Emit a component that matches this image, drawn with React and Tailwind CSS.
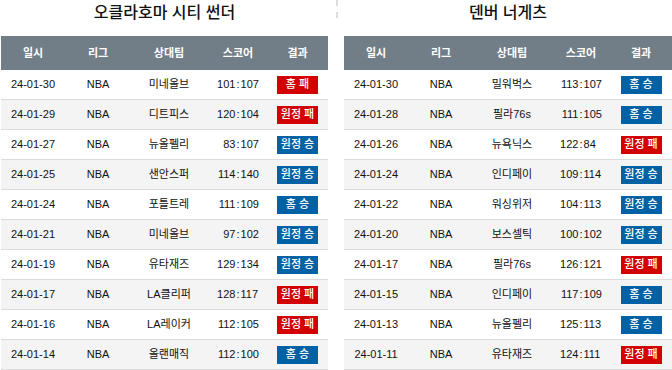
import React from "react";

const LEFT = [
  ["24-01-30", "미네올브", "101:107", "홈 패"],
  ["24-01-29", "디트피스", "120:104", "원정 패"],
  ["24-01-27", "뉴올펠리", "83:107", "원정 승"],
  ["24-01-25", "샌안스퍼", "114:140", "원정 승"],
  ["24-01-24", "포틀트레", "111:109", "홈 승"],
  ["24-01-21", "미네올브", "97:102", "원정 승"],
  ["24-01-19", "유타재즈", "129:134", "원정 승"],
  ["24-01-17", "LA클리퍼", "128:117", "원정 패"],
  ["24-01-16", "LA레이커", "112:105", "원정 패"],
  ["24-01-14", "올랜매직", "112:100", "홈 승"],
];

const RIGHT = [
  ["24-01-30", "밀워벅스", "113:107", "홈 승"],
  ["24-01-28", "필라76s", "111:105", "홈 승"],
  ["24-01-26", "뉴욕닉스", "122:84", "원정 패"],
  ["24-01-24", "인디페이", "109:114", "원정 승"],
  ["24-01-22", "워싱위저", "104:113", "원정 승"],
  ["24-01-20", "보스셀틱", "100:102", "원정 승"],
  ["24-01-17", "필라76s", "126:121", "원정 패"],
  ["24-01-15", "인디페이", "117:109", "홈 승"],
  ["24-01-13", "뉴올펠리", "125:113", "홈 승"],
  ["24-01-11", "유타재즈", "124:111", "원정 패"],
];

function Score({ s }) {
  const [a, b] = s.split(":");
  return (
    <div className="grid w-full grid-cols-[1fr_auto_1fr]">
      <span className="text-right">{a}</span>
      <span className="px-[1px]">:</span>
      <span className="text-left">{b}</span>
    </div>
  );
}

function Badge({ r }) {
  const win = r.endsWith("승");
  return (
    <div
      className={
        win
          ? "flex h-[18px] w-[41px] items-center justify-center bg-[#0062a4] text-[11px] font-medium text-white"
          : "flex h-[18px] w-[41px] items-center justify-center bg-[#d20000] text-[11px] font-medium text-white"
      }
    >
      {r}
    </div>
  );
}

function Panel({ title, rows, width }) {
  return (
    <div className={width}>
      <div className="flex h-[36px] items-start justify-center pt-[1px] text-[16px] font-medium leading-[24px] text-[#111]">
        {title}
      </div>
      <div className="grid h-[34px] grid-cols-[64px_66px_76px_62px_1fr] items-center bg-[#717e88] text-[11px] font-bold text-white">
        <div className="text-center">일시</div>
        <div className="text-center">리그</div>
        <div className="text-center">상대팀</div>
        <div className="text-center">스코어</div>
        <div className="pr-[2px] text-center">결과</div>
      </div>
      {rows.map((r, i) => (
        <div
          key={i}
          className={
            i % 2 === 0
              ? "grid h-[30px] grid-cols-[64px_66px_76px_62px_1fr] items-center border-b border-[#dcdcdc] bg-white text-[11px] text-[#111]"
              : "grid h-[30px] grid-cols-[64px_66px_76px_62px_1fr] items-center border-b border-[#dcdcdc] bg-[#f4f4f4] text-[11px] text-[#111]"
          }
        >
          <div className="text-center">{r[0]}</div>
          <div className="text-center">NBA</div>
          <div className="text-center">{r[1]}</div>
          <div className="flex justify-center">
            <Score s={r[2]} />
          </div>
          <div className="flex justify-center pr-[2px]">
            <Badge r={r[3]} />
          </div>
        </div>
      ))}
    </div>
  );
}

export default function App() {
  return (
    <div className="flex h-[370px] w-[672px] overflow-hidden bg-white font-['Liberation_Sans','Noto_Sans_CJK_KR',sans-serif]">
      <div className="w-[1px]" />
      <Panel title="오클라호마 시티 썬더" rows={LEFT} width="w-[327px]" />
      <div className="w-[8px]" />
      <div className="h-[18px] w-[2px] border-l-2 border-dashed border-[#dddddd]" />
      <div className="w-[6px]" />
      <Panel title="덴버 너게츠" rows={RIGHT} width="w-[328px]" />
    </div>
  );
}
